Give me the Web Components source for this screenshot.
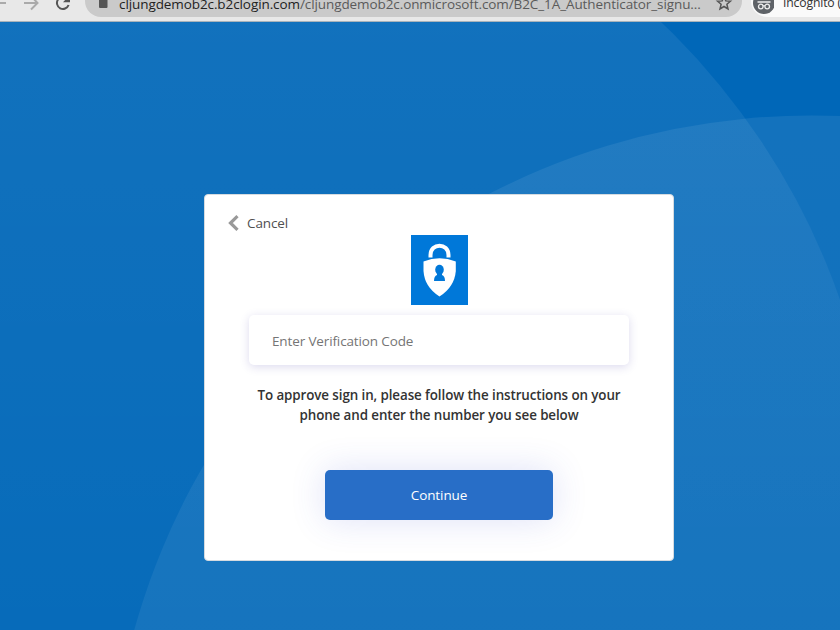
<!DOCTYPE html>
<html lang="en"><head><meta charset="utf-8"><title>Sign in</title>
<style>html,body{margin:0;height:100%;overflow:hidden}body{font-family:"Open Sans","Noto Sans",sans-serif}</style></head>
<body><verify-page></verify-page>
<script>
const define=(name,html)=>customElements.define(name,class extends HTMLElement{
  constructor(){super();this.attachShadow({mode:'open'}).innerHTML=html;}
});
define('browser-bar',`<style>
:host{display:flex;height:22px;box-sizing:border-box;background:#e8e8e8;border-bottom:1px solid #a9b3ba;overflow:hidden;align-items:flex-start}
svg{display:block;flex:none}.nav{width:85px}
.address{display:flex;width:657px;height:17px;background:#cacaca;border-radius:0 0 16px 16px;overflow:hidden}
.lock{width:34px}.url{width:592px;font-size:13.5px;line-height:18px;margin-top:-5px;color:#5a5a5a;white-space:nowrap;letter-spacing:-.09px}
.url b{font-weight:400;color:#222}.star{width:31px}
.profile{display:flex;margin-left:9px;width:89px;height:17px;background:#fafafa;border-radius:0 0 0 16px}
.name{font-size:12.2px;line-height:18px;margin:-6px 0 0 9px;color:#333;white-space:nowrap;letter-spacing:-.15px}
</style>
<svg class="nav" width="85" height="20" fill="none" stroke-width="2"><path d="M0 3H6" stroke="#aaa"/><path d="M24 3H37M31-4L37.5 3L31 9.5" stroke="#aaa"/><path d="M67-1.5A6 6 0 1 0 68.6 5" stroke="#555"/><path d="M63 2.2H70V-5" fill="#555" stroke="none"/></svg>
<div class="address"><svg class="lock" width="34" height="17"><rect x="14" y="-1" width="8.5" height="9" rx="1" fill="#555"/></svg>
<div class="url"><b>cljungdemob2c.b2clogin.com</b>/cljungdemob2c.onmicrosoft.com/B2C_1A_Authenticator_signu...</div>
<svg class="star" width="31" height="17"><path d="M13-4.5L14.8 .8L19.5 1.2L15.9 4.3L17 9L13 6.5L9 9L10.1 4.3L6.5 1.2L11.2 .8Z" fill="none" stroke="#555" stroke-width="1.5"/></svg></div>
<div class="profile"><svg width="23" height="17"><circle cx="13" cy="3" r="11" fill="#5f6368"/><path d="M6.5 2H19.5M9.5-1.5H16.5" stroke="#eee" stroke-width="1.4"/><g fill="none" stroke="#eee" stroke-width="1.3"><circle cx="9.8" cy="6.5" r="2.3"/><circle cx="16.2" cy="6.5" r="2.3"/><path d="M12.1 6Q13 5.5 13.9 6"/></g></svg><div class="name">Incognito (</div></div>`);
define('circle-backdrop',`<style>:host{display:block;position:absolute;inset:0;background:#0067b8}svg{display:block}</style>
<svg width="840" height="608" viewBox="0 22 840 608"><defs>
<linearGradient id="a" gradientUnits="userSpaceOnUse" x1="0" y1="22" x2="0" y2="630"><stop stop-color="#fff" stop-opacity=".07"/><stop offset="1" stop-color="#fff" stop-opacity=".028"/></linearGradient>
<linearGradient id="b" gradientUnits="userSpaceOnUse" x1="0" y1="115" x2="0" y2="630"><stop stop-color="#fff" stop-opacity=".075"/><stop offset="1" stop-color="#fff" stop-opacity=".06"/></linearGradient></defs>
<circle cx="177" cy="530.5" r="702" fill="url(#a)"/><circle cx="811.5" cy="818.5" r="703" fill="url(#b)"/></svg>`);
define('back-link',`<style>:host{display:flex;align-items:center;gap:8px;height:20px;margin-left:-21px;font-size:13.5px;line-height:20px;color:#505050}svg{display:block}span{letter-spacing:-.1px}</style>
<svg width="11" height="16"><path d="M9.5 1.2L2.5 8L9.5 14.8" fill="none" stroke="#999" stroke-width="3.2"/></svg><span><slot></slot></span>`);
define('lock-logo',`<style>:host{display:block;width:57px;height:70px;margin:2px auto 0}svg{display:block}</style>
<svg width="57" height="70"><path fill="#0078d9" d="M0 0H57V70H0Z"/><path d="M19.5 22.5V20C19.5 7.5 37.5 7.5 37.5 20V22.5" fill="none" stroke="#fff" stroke-width="4"/><path d="M12.5 26.5Q28.5 20 44.8 26.5V36Q43.5 52 28.5 61.5Q13.5 52 12.5 36Z" fill="#fff"/><ellipse cx="28.5" cy="34.7" rx="4.3" ry="5" fill="#0078d9"/><path d="M26 37H31V40Q34 41 34 46H23Q23 41 26 40Z" fill="#0078d9"/></svg>`);
define('code-field',`<style>:host{display:flex;align-items:center;height:50px;margin-top:10px;padding:2px 23px 0;box-sizing:border-box;border-radius:5px;background:#fff;box-shadow:0 2px 10px rgba(60,50,160,.18);color:#757575;font-size:13.5px;letter-spacing:-.13px}</style><slot></slot>`);
define('hint-text',`<style>:host{display:block;margin-top:20px;text-align:center;font-size:13.4px;font-weight:550;letter-spacing:-.1px;line-height:20px;color:#333;white-space:nowrap}</style><slot></slot>`);
define('primary-button',`<style>:host{display:flex;align-items:center;justify-content:center;width:228px;height:50px;margin:45px auto 0;border-radius:5px;background:#286ec7;color:#fff;font-size:13.5px;letter-spacing:-.1px;box-shadow:0 0 34px rgba(60,80,210,.17)}</style><slot></slot>`);
define('sign-card',`<style>:host{display:block;position:relative;width:470px;height:367px;box-sizing:border-box;padding:18px 44px;margin:172px 0 0 204px;background:#fff;border:1px solid #d5dbe0;border-radius:4px}</style><slot></slot>`);
define('verify-page',`<style>:host{display:flex;flex-direction:column;width:840px;height:630px}main{position:relative;flex:1;display:flow-root}</style>
<browser-bar></browser-bar><main><circle-backdrop></circle-backdrop><sign-card>
<back-link>Cancel</back-link><lock-logo></lock-logo><code-field>Enter Verification Code</code-field>
<hint-text>To approve sign in, please follow the instructions on your<br>phone and enter the number you see below</hint-text>
<primary-button>Continue</primary-button></sign-card></main>`);
</script></body></html>
